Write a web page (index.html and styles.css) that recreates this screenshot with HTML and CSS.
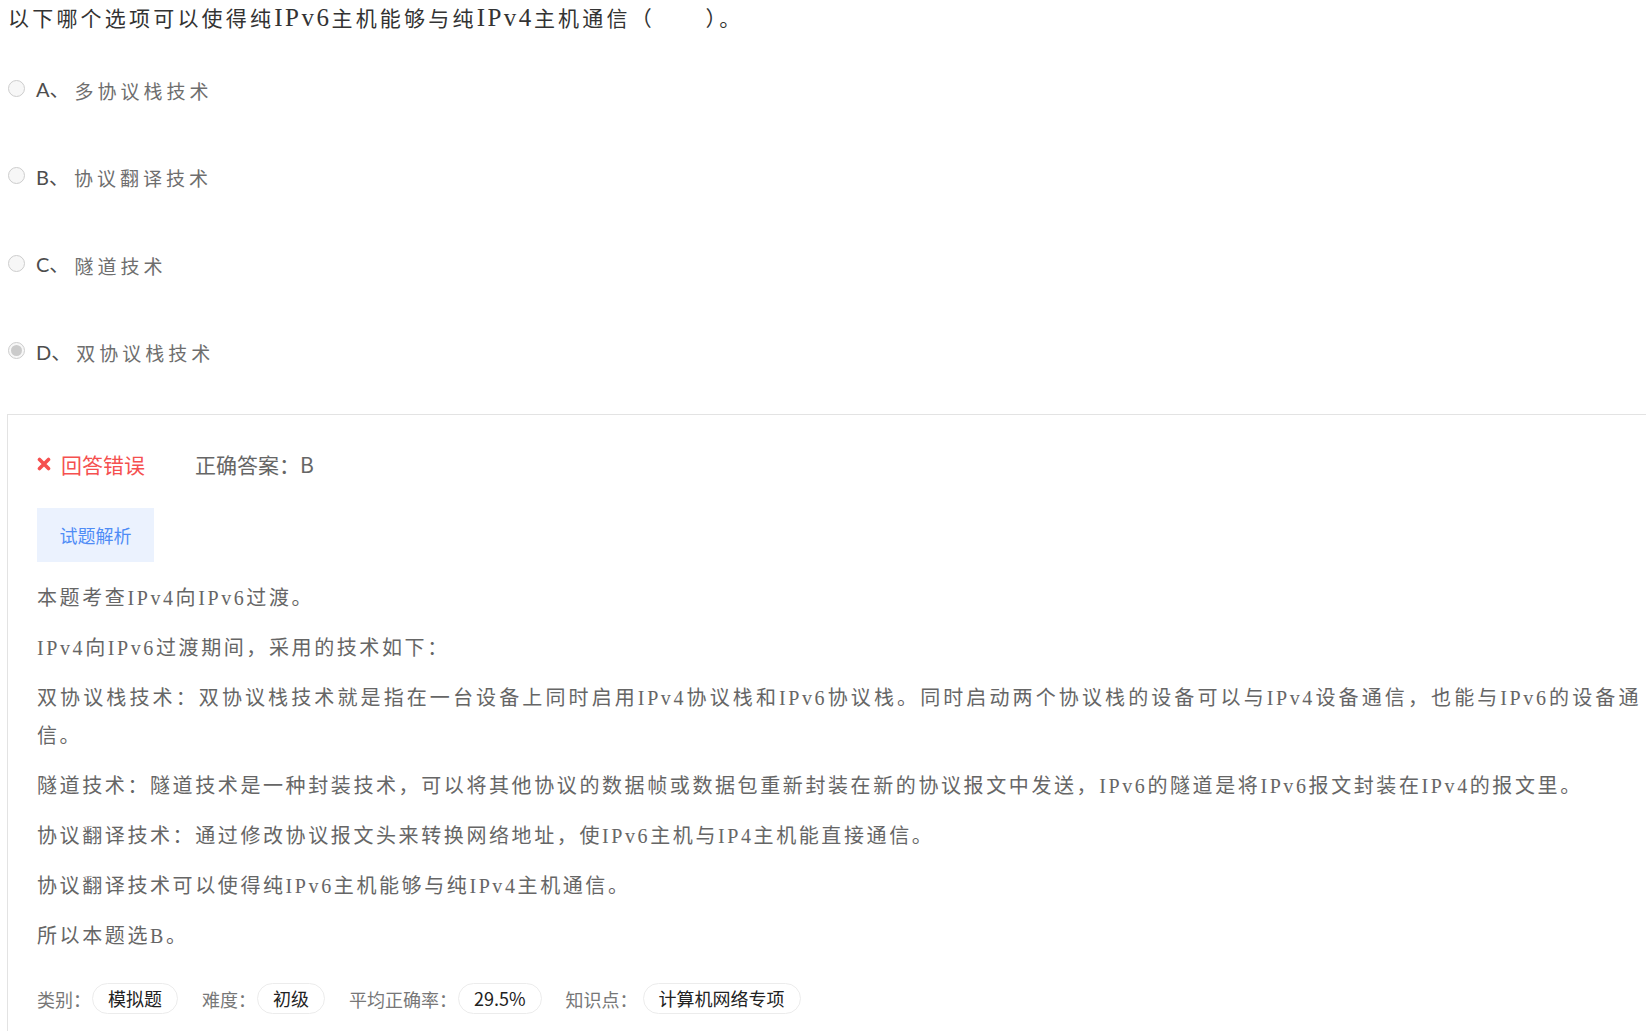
FILE: index.html
```html
<!DOCTYPE html>
<html lang="zh-CN">
<head>
<meta charset="utf-8">
<title>试题</title>
<link rel="stylesheet" href="styles.css">
</head>
<body>
<div class="page">
  <div class="question">以下哪个选项可以使得纯<span class="q-latin">IPv6</span>主机能够与纯<span class="q-latin">IPv4</span>主机通信（&nbsp;&nbsp;&nbsp;&nbsp;&nbsp;&nbsp;）。</div>

  <ul class="options">
    <li class="option"><span class="radio"></span><span class="opt-key">A、</span><span class="opt-text">多协议栈技术</span></li>
    <li class="option"><span class="radio"></span><span class="opt-key">B、</span><span class="opt-text">协议翻译技术</span></li>
    <li class="option"><span class="radio"></span><span class="opt-key">C、</span><span class="opt-text">隧道技术</span></li>
    <li class="option"><span class="radio radio-checked"></span><span class="opt-key">D、</span><span class="opt-text">双协议栈技术</span></li>
  </ul>

  <div class="analysis">
    <div class="status">
      <span class="wrong">
        <svg class="x-icon" viewBox="0 0 14 14" width="14" height="14"><path d="M2.5 2.5 L11.5 11.5 M11.5 2.5 L2.5 11.5" stroke="#f5504f" stroke-width="3.6" stroke-linecap="round"/></svg>
        回答错误
      </span>
      <span class="correct">正确答案：B</span>
    </div>

    <div class="tab">试题解析</div>

    <div class="explain">
      <p>本题考查IPv4向IPv6过渡。</p>
      <p>IPv4向IPv6过渡期间，采用的技术如下：</p>
      <p>双协议栈技术：双协议栈技术就是指在一台设备上同时启用IPv4协议栈和IPv6协议栈。同时启动两个协议栈的设备可以与IPv4设备通信，也能与IPv6的设备通信。</p>
      <p>隧道技术：隧道技术是一种封装技术，可以将其他协议的数据帧或数据包重新封装在新的协议报文中发送，IPv6的隧道是将IPv6报文封装在IPv4的报文里。</p>
      <p>协议翻译技术：通过修改协议报文头来转换网络地址，使IPv6主机与IP4主机能直接通信。</p>
      <p>协议翻译技术可以使得纯IPv6主机能够与纯IPv4主机通信。</p>
      <p>所以本题选B。</p>
    </div>

    <div class="meta">
      <span class="meta-label">类别：</span><span class="pill">模拟题</span>
      <span class="meta-label">难度：</span><span class="pill">初级</span>
      <span class="meta-label">平均正确率：</span><span class="pill">29.5%</span>
      <span class="meta-label">知识点：</span><span class="pill pill-wide">计算机网络专项</span>
    </div>
  </div>
</div>
</body>
</html>
```

FILE: styles.css
```css
html, body {
  margin: 0;
  padding: 0;
  background: #ffffff;
  overflow: hidden;
}

.page {
  padding-left: 8px;
  font-family: "Liberation Serif", "Noto Sans CJK SC", serif;
}

.question {
  height: 38px;
  font-size: 21px;
  line-height: 38px;
  letter-spacing: 3.2px;
  color: #333333;
  white-space: nowrap;
}

.q-latin {
  font-size: 25px;
  line-height: 20px;
  letter-spacing: 2.5px;
}

.options {
  list-style: none;
  margin: 37px 0 0 0;
  padding: 0;
}

.option {
  display: flex;
  align-items: center;
  height: 30px;
  margin-bottom: 57.5px;
}

.option:last-child {
  margin-bottom: 46.5px;
}

.radio {
  box-sizing: border-box;
  width: 17px;
  height: 17px;
  border-radius: 50%;
  border: 1px solid #cdcdcd;
  background: #f7f7f7;
  margin-top: -4px;
  margin-right: 11px;
  flex: none;
  display: flex;
  align-items: center;
  justify-content: center;
}

.radio-checked::after {
  content: "";
  width: 11px;
  height: 11px;
  border-radius: 50%;
  background: #cbcbcb;
}

.opt-key {
  font-family: "Lato", "Noto Sans CJK SC", sans-serif;
  font-size: 20px;
  color: #4d4d4d;
  margin-right: 5px;
  margin-top: -3px;
}

.opt-text {
  font-size: 19px;
  letter-spacing: 4px;
  color: #6e6e6e;
}

.analysis {
  border-top: 1px solid #e3e3e3;
  border-left: 1px solid #e3e3e3;
  margin-left: -1px;
  padding: 34px 5px 40px 29px;
}

.status {
  display: flex;
  align-items: center;
  height: 30px;
  font-family: "Noto Sans CJK SC", sans-serif;
  font-size: 21px;
}

.wrong {
  display: flex;
  align-items: center;
  color: #f5504f;
  margin-right: 50px;
}

.x-icon {
  margin-right: 10px;
}

.correct {
  color: #666666;
}

.tab {
  display: inline-flex;
  align-items: center;
  justify-content: center;
  width: 117px;
  height: 54px;
  margin-top: 29px;
  background: #ebf2fe;
  color: #4f8cf6;
  font-family: "Noto Sans CJK SC", sans-serif;
  font-size: 18px;
}

.explain {
  margin-top: 17px;
}

.explain p {
  margin: 0 0 12px 0;
  font-size: 20px;
  line-height: 38px;
  letter-spacing: 2.6px;
  color: #666666;
  text-align: justify;
}

.meta {
  display: flex;
  align-items: center;
  margin-top: 28px;
  font-family: "Noto Sans CJK SC", sans-serif;
  font-size: 18px;
}

.meta-label {
  color: #777777;
  margin-right: 1px;
}

.pill {
  box-sizing: border-box;
  height: 31px;
  line-height: 29px;
  padding: 0 15px;
  border: 1px solid #ececec;
  border-radius: 16px;
  color: #222222;
  margin-right: 24px;
}

.pill-wide {
  margin-left: 4px;
}
```
